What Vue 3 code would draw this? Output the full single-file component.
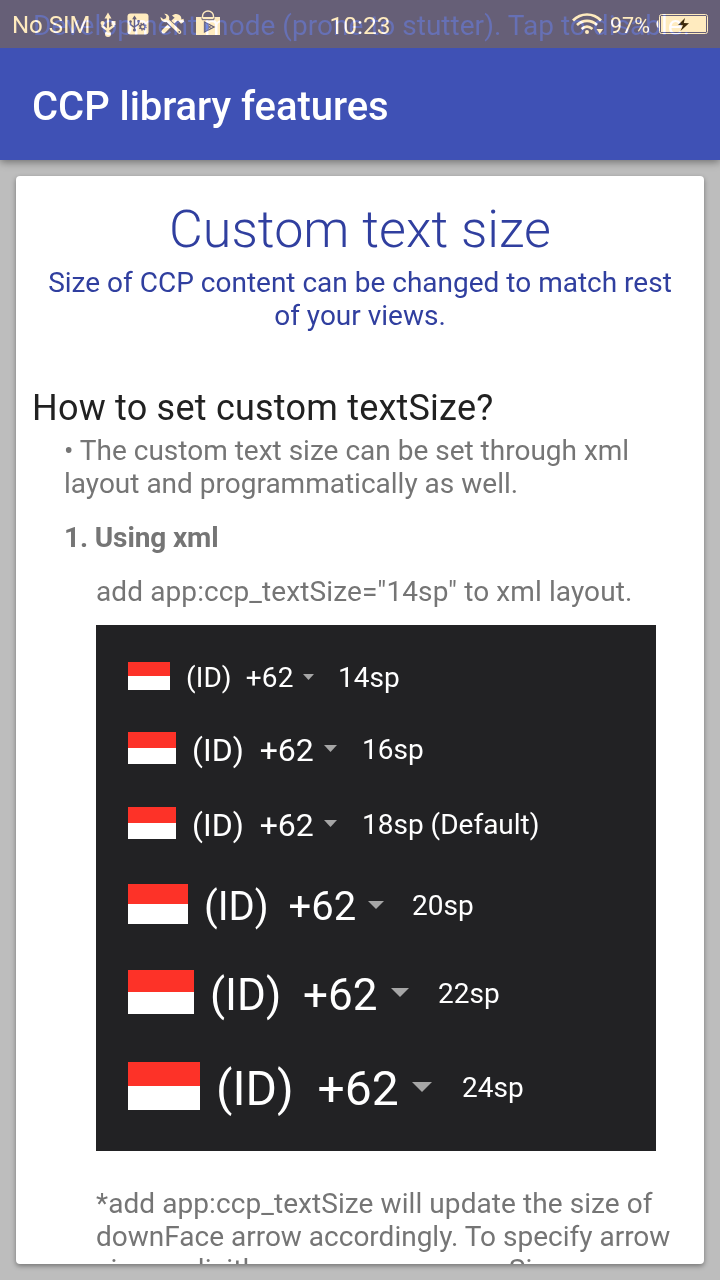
<script setup>
const sizes = [
  { id: 's14', label: '14sp' },
  { id: 's16', label: '16sp' },
  { id: 's18', label: '18sp (Default)' },
  { id: 's20', label: '20sp' },
  { id: 's22', label: '22sp' },
  { id: 's24', label: '24sp' },
]
</script>

<template>
  <div class="screen">
    <header class="status">
      <div class="status-row">
        <div class="side left">
          <span class="sim">No SIM</span>
          <svg class="usb" width="16" height="26" viewBox="0 0 16 26">
            <path d="M8 3v18M2.500 11v3.500L8 18.500M13.500 10v4L8 18" fill="none" stroke="#ffebbf" stroke-width="2.200" />
            <path d="M8 .5l3.500 6h-7z" fill="#ffebbf" /><circle cx="8" cy="22" r="3" fill="#ffebbf" />
            <circle cx="2.600" cy="11" r="2.100" fill="#ffebbf" /><rect x="11.500" y="9" width="4" height="4" fill="#ffebbf" />
          </svg>
          <svg class="box" width="22" height="22" viewBox="0 0 22 22">
            <rect x=".5" y=".5" width="21" height="21" rx="3" fill="#ffebbf" />
            <g fill="none" stroke="#665f77" stroke-width="1.500">
              <path d="M7.500 4v13M3.500 8v3.500l4 3M11.500 8v3l-4 3" /><circle cx="15.700" cy="13.700" r="2.300" />
              <circle cx="15.700" cy="13.700" r="3.400" stroke-width="1.200" stroke-dasharray="1.300 1.370" />
            </g>
            <path d="M7.500 2.500l2.300 3.700H5.200z" fill="#665f77" /><circle cx="7.500" cy="17" r="1.600" fill="#665f77" />
            <circle cx="3.500" cy="8.500" r="1.200" fill="#665f77" /><rect x="10.400" y="7" width="2.300" height="2.300" fill="#665f77" />
          </svg>
          <svg class="tools" width="24" height="22" viewBox="0 0 24 22">
            <path d="M3.500 18.500L15 7" stroke="#ffebbf" stroke-width="4" stroke-linecap="round" />
            <path d="M12 2.500c3-2.500 7-2 9 1.200l.5 2.800 2-.8.500 3-3 2-2.600-3-1.600.2-1.500 1.300-2-2.200 1.500-2z" fill="#ffebbf" />
            <path d="M7 7.500l12.500 11.500" stroke="#665f77" stroke-width="5.400" />
            <path d="M7 7l12.500 12" stroke="#ffebbf" stroke-width="3.600" stroke-linecap="round" />
            <path d="M4.200.8c3.600-.5 6 2.800 4.800 6L7 9C3.500 9.800.3 7.500.6 4l2.800 2.300 2.600-1L6.300 3z" fill="#ffebbf" />
            <circle cx="19.300" cy="18.800" r=".9" fill="#665f77" />
          </svg>
          <svg class="bag" width="24" height="26" viewBox="0 0 24 26">
            <path d="M0 7h24v18H0z" fill="#ffebbf" />
            <path d="M6 7v2.500M18 7v2.500M6 9.700h12" fill="none" stroke="#665f77" stroke-width="1" />
            <path d="M6.500 8V6.500a5.500 5.500 0 0 1 11 0V8" fill="none" stroke="#ffebbf" stroke-width="1.400" />
            <path d="M8.500 12v10l9.500-5z" fill="#ffebbf" stroke="#665f77" stroke-width="1.300" /><path d="M8.500 12v10l5-5z" fill="#7079a8" /><path d="M9 12l6 6.500M9 22l6-6.500" stroke="#665f77" />
          </svg>
        </div>
        <span class="clock">10:23</span>
        <div class="side right">
          <svg class="wifi" width="32" height="22" viewBox="0 0 32 22">
            <g fill="none" stroke="#ffebbf" stroke-width="2.700">
              <path d="M1 7.500C9-.5 21-.5 29 7.500" /><path d="M5 12c6-5.500 14-5.500 20 0" /><path d="M9.500 16c4-3.300 7-3.300 11 0" />
            </g>
            <circle cx="15" cy="19" r="2" fill="#ffebbf" /><path d="M24.500 16h6.500l-3.200 5z" fill="#ffebbf" />
          </svg>
          <span class="pct">97%</span>
          <svg class="battery" width="52" height="20" viewBox="0 0 52 20">
            <path d="M2.300 6C-.2 7-.2 13 2.300 14z" fill="#ffebbf" />
            <rect x="3.500" y=".5" width="48" height="19" rx="2" fill="none" stroke="#ffebbf" stroke-width="1" />
            <rect x="5" y="2" width="45" height="16" fill="#ffebbf" />
            <path d="M29 4l-7 7 5 .2L24.500 17l8.500-7.800-5.200-.2z" fill="#3d2a0c" />
          </svg>
        </div>
      </div>
      <div class="ticker">Development mode (prone to stutter). Tap to disable.</div>
    </header>

    <div class="toolbar"><h1>CCP library features</h1></div>

    <main class="card">
      <h2>Custom text size</h2>
      <p class="lead">Size of CCP content can be changed to match rest<br>of your views.</p>
      <h3>How to set custom textSize?</h3>
      <p class="bullet">• The custom text size can be set through xml<br>layout and programmatically as well.</p>
      <h4>1. Using xml</h4>
      <p class="note">add app:ccp_textSize="14sp" to xml layout.</p>
      <section class="panel">
        <div v-for="s in sizes" :key="s.id" class="row" :class="s.id">
          <span class="flag"></span>
          <span class="code">(ID)&nbsp; +62</span>
          <svg class="arrow" viewBox="0 0 20 10" preserveAspectRatio="none"><path d="M0 0h20L10 10z" fill="#a6a6a6" /></svg>
          <span class="label">{{ s.label }}</span>
        </div>
      </section>
      <p class="foot"><span class="wide">*add app:ccp_textSize will update the size of</span><br>downFace arrow accordingly. To specify arrow<br><span class="wide">size explicitly, use app:ccp_arrowSize</span></p>
    </main>
  </div>
</template>

<style>
body { margin: 0; overflow: hidden; }
</style>

<style scoped>
.screen {
  width: 720px; height: 1280px; overflow: hidden; background: #bdbdbd;
  font-family: Roboto, "Liberation Sans", sans-serif;
  display: flex; flex-direction: column;
}
h1, h2, h3, h4, p { margin: 0; font-weight: 400; white-space: nowrap; }
.status { height: 48px; flex: none; background: #665f77; position: relative; }
.ticker {
  position: absolute; left: 33px; top: 9px; font-size: 28px; line-height: 33px; letter-spacing: .03px;
  color: #00113e; mix-blend-mode: plus-lighter; white-space: nowrap;
}
.status-row {
  height: 48px; display: grid; grid-template-columns: 1fr auto 1fr; align-items: center;
  padding: 0 12px; color: #ffebbf; font-size: 24.500px; line-height: 30px;
}
.side { display: flex; align-items: center; }
.right { justify-content: flex-end; }
.sim { width: 88px; font-size: 24px; white-space: nowrap; padding-top: 2px; }
.usb { margin-top: 1px; }
.box { margin-left: 11px; }
.tools { margin-left: 11px; }
.bag { margin-left: 12px; margin-top: -2px; }
.clock { padding-top: 3px; }
.wifi { margin-right: 6px; }
.pct { font-size: 21.500px; width: 46px; padding-top: 3px; }
.battery { margin-top: 0; }
.toolbar {
  height: 112px; flex: none; background: #3f51b5; display: flex; align-items: center; padding: 6px 32px 0;
  box-sizing: border-box; box-shadow: 0 2px 8px rgba(0, 0, 0, .42);
}
h1 { font-size: 40px; font-weight: 500; color: #fff; line-height: 48px; letter-spacing: -.05px; }
.card {
  margin: 16px; height: 1088px; background: #fff; border-radius: 4px; overflow: hidden; box-sizing: border-box;
  padding: 22px 16px 0; box-shadow: 0 2px 5px rgba(0, 0, 0, .38);
}
h2 { font-size: 52px; font-weight: 300; line-height: 64px; color: #303f9f; text-align: center; letter-spacing: .06px; }
.lead { margin-top: 4px; font-size: 28px; line-height: 33px; color: #303f9f; text-align: center; }
h3 { margin-top: 55px; font-size: 36px; line-height: 42px; color: #212121; letter-spacing: .22px; }
.bullet { margin: 5px 0 0 32px; font-size: 28px; line-height: 33px; color: #757575; }
h4 { margin: 21px 0 0 32px; font-size: 28px; line-height: 33px; font-weight: 700; color: #757575; letter-spacing: -.12px; }
.note { margin: 21px 0 0 64px; font-size: 28px; line-height: 33px; color: #757575; letter-spacing: .1px; }
.panel {
  margin: 17px 0 0 64px; width: 560px; height: 526px; box-sizing: border-box; padding: 15px 32px 17px;
  background: #222224; color: #fff; display: grid; grid-template-rows: 72px 72px 78px 84px 92px 96px;
}
.row { display: flex; align-items: center; white-space: nowrap; }
.flag { width: var(--fw); height: var(--fh); flex: none; background: linear-gradient(#fd3228 50%, #fff 50%); }
.code { margin-left: 16px; width: var(--cw); font-size: var(--fs); line-height: 1.17; margin-top: var(--drop); }
.arrow { width: var(--aw); height: var(--ah); margin-top: 1px; flex: none; }
.label { margin-left: var(--gap); font-size: 28px; line-height: 33px; margin-top: 3px; }
.s14 { --fw: 42px; --fh: 28px; --fs: 28px; --cw: 116.500px; --aw: 11px; --ah: 6px; --gap: 24.500px; --drop: 4px; }
.s16, .s18 { --fw: 48px; --fh: 32px; --fs: 32px; --cw: 131.500px; --aw: 13px; --ah: 7px; --gap: 25.500px; --drop: 5px; }
.s20 { --fw: 60px; --fh: 40px; --fs: 40px; --cw: 164px; --aw: 16px; --ah: 8px; --gap: 28px; --drop: 6px; }
.s22 { --fw: 66px; --fh: 44px; --fs: 44px; --cw: 181px; --aw: 18px; --ah: 9px; --gap: 29px; --drop: 8px; }
.s24 { --fw: 72px; --fh: 48px; --fs: 48px; --cw: 196px; --aw: 20px; --ah: 10px; --gap: 30px; --drop: 6px; }
.s14 .code { letter-spacing: .1px; }
.foot { margin: 36px 0 0 64px; font-size: 28px; line-height: 33px; color: #757575; }
.wide { letter-spacing: .075px; }
</style>
